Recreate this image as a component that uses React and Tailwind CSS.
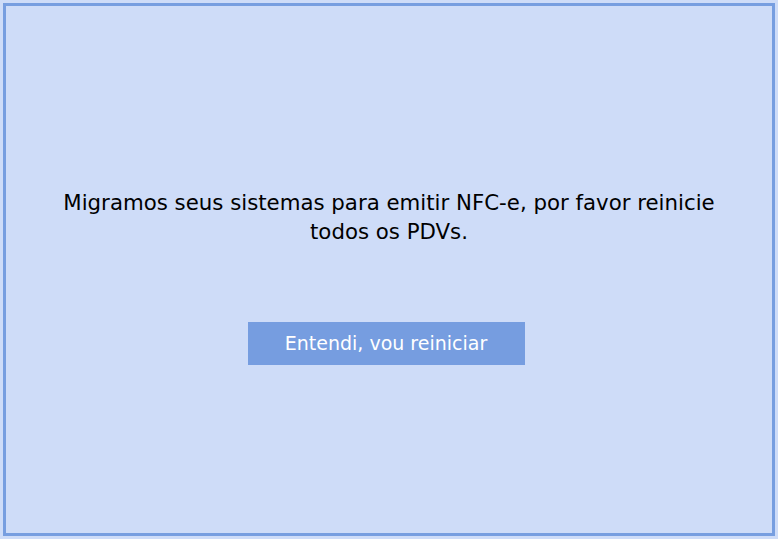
const App = () => {
  return (
    <div className="h-[539px] w-[778px] bg-[#cedcf8] p-[3px]" style={{ fontFamily: '"DejaVu Sans", Tahoma, sans-serif' }}>
      <div className="flex h-full w-full flex-col items-center justify-center border-[3px] border-[#779ee0] bg-[#cedcf8] pt-[14px]">
        <p className="w-[690px] text-center text-[21.3px] leading-[29px] text-black">
          Migramos seus sistemas para emitir NFC-e, por favor reinicie todos os PDVs.
        </p>
        <button
          type="button"
          className="mr-[6px] mt-[76px] h-[43px] w-[277px] bg-[#769de0] text-[19px] text-white"
        >
          Entendi, vou reiniciar
        </button>
      </div>
    </div>
  );
};

export default App;
